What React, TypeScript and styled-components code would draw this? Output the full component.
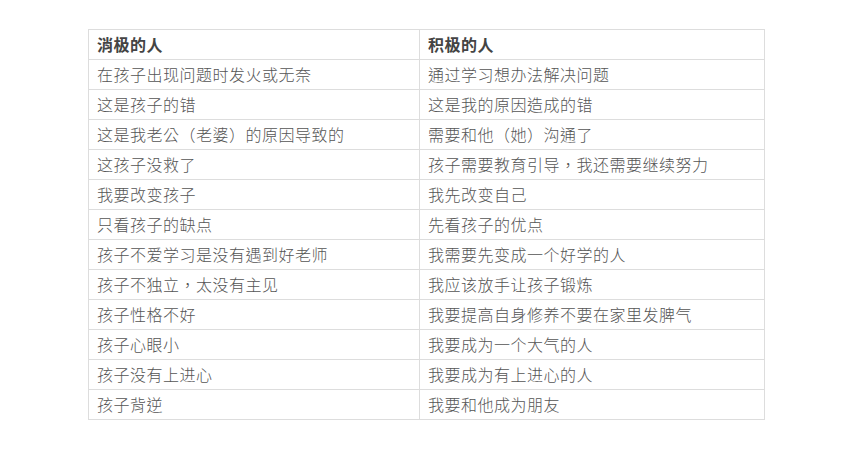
import styled, { createGlobalStyle } from 'styled-components';

const rows: [string, string][] = [
  ['在孩子出现问题时发火或无奈', '通过学习想办法解决问题'],
  ['这是孩子的错', '这是我的原因造成的错'],
  ['这是我老公（老婆）的原因导致的', '需要和他（她）沟通了'],
  ['这孩子没救了', '孩子需要教育引导，我还需要继续努力'],
  ['我要改变孩子', '我先改变自己'],
  ['只看孩子的缺点', '先看孩子的优点'],
  ['孩子不爱学习是没有遇到好老师', '我需要先变成一个好学的人'],
  ['孩子不独立，太没有主见', '我应该放手让孩子锻炼'],
  ['孩子性格不好', '我要提高自身修养不要在家里发脾气'],
  ['孩子心眼小', '我要成为一个大气的人'],
  ['孩子没有上进心', '我要成为有上进心的人'],
  ['孩子背逆', '我要和他成为朋友'],
];

const GlobalStyle = createGlobalStyle`
  html, body {
    margin: 0;
    padding: 0;
    background: #ffffff;
  }
`;

const Page = styled.div`
  padding: 29px 0 0 88px;
  font-family: 'Noto Sans CJK TC', 'Noto Sans CJK SC', 'Noto Sans', sans-serif;
`;

const Table = styled.table`
  border-collapse: collapse;
  width: 677px;
  table-layout: fixed;
`;

const Cell = styled.td<{ $head?: boolean }>`
  border: 1px solid #dddddd;
  height: 29px;
  padding: 0 8px;
  box-sizing: border-box;
  font-size: 16px;
  letter-spacing: 0.5px;
  line-height: 29px;
  white-space: nowrap;
  color: ${(p) => (p.$head ? '#444444' : '#555555')};
  font-weight: ${(p) => (p.$head ? 700 : 300)};
  vertical-align: middle;
`;

const LeftCol = styled.col`
  width: 331px;
`;

export default function App() {
  return (
    <>
      <GlobalStyle />
      <Page>
        <Table>
          <colgroup>
            <LeftCol />
            <col />
          </colgroup>
          <tbody>
            <tr>
              <Cell $head>消极的人</Cell>
              <Cell $head>积极的人</Cell>
            </tr>
            {rows.map(([neg, pos]) => (
              <tr key={neg}>
                <Cell>{neg}</Cell>
                <Cell>{pos}</Cell>
              </tr>
            ))}
          </tbody>
        </Table>
      </Page>
    </>
  );
}
